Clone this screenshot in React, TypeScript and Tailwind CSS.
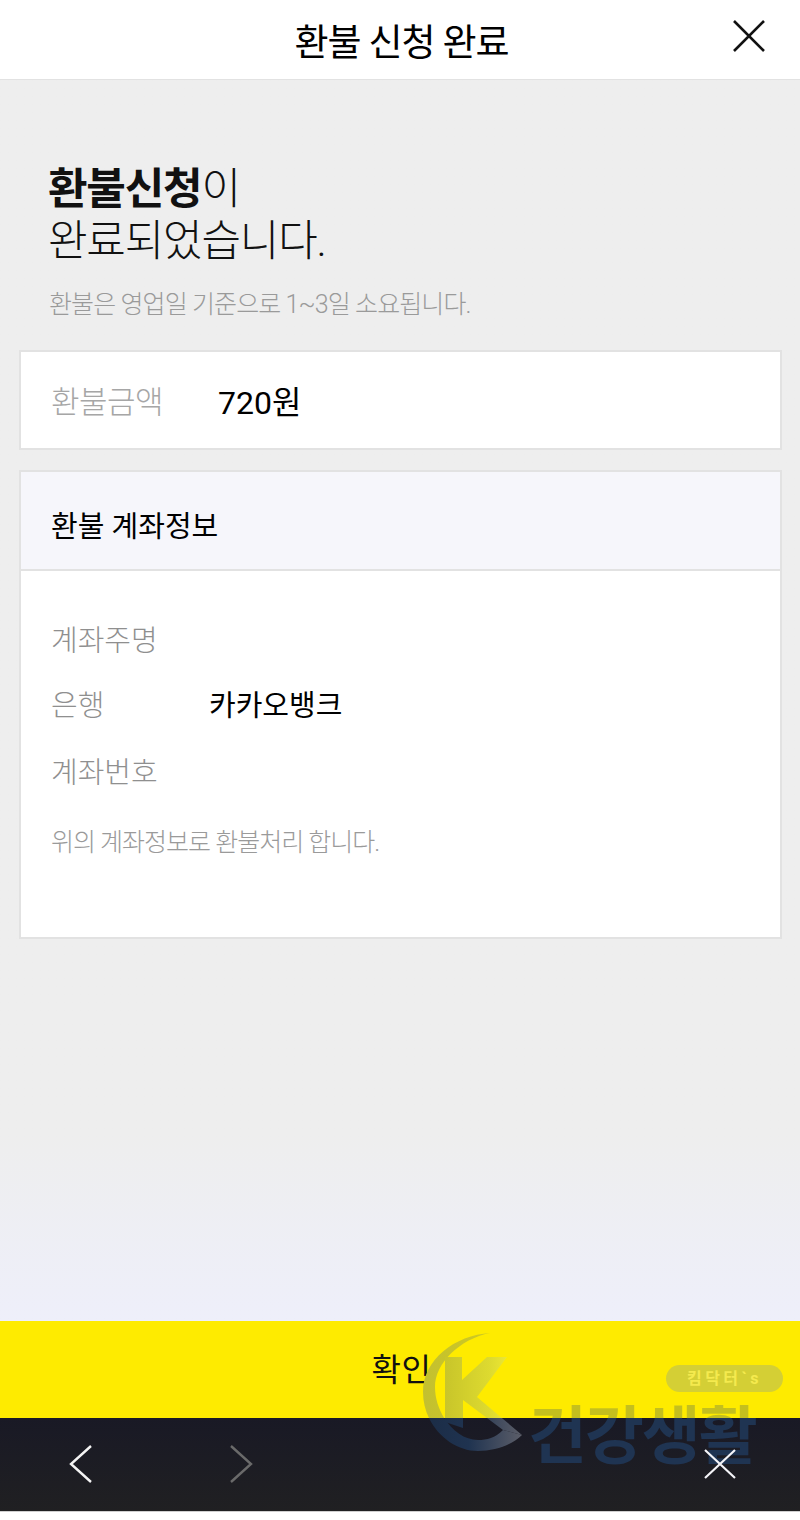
const kr = "font-['Roboto','Noto_Sans_CJK_KR','Noto_Sans',sans-serif]";

function Watermark() {
  const ring = "M75 8 C40 10 8 35 8 67 C8 100 35 126 63 126 C80 126 97 120 107 110 L88 105 C80 113 72 115 63 115 C40 115 20 88 20 62 C20 38 45 14 75 8 Z";
  const k = "M30 32 H47 V55 L72 32 H92 L62 72 L107 110 L88 105 L48 75 V103 L30 97 Z";
  return (
    <div className="absolute left-[415px] top-[1325px] w-[375px] h-[150px] pointer-events-none">
      <svg className="absolute left-0 top-0" width="125" height="135" viewBox="0 0 125 135" fill="none">
        <defs>
          <clipPath id="above"><rect x="0" y="0" width="125" height="93" /></clipPath>
          <clipPath id="below"><rect x="0" y="93" width="125" height="42" /></clipPath>
          <linearGradient id="ringTop" x1="0" y1="0" x2="1" y2="0">
            <stop offset="0" stopColor="#c3c030" />
            <stop offset="0.7" stopColor="#cfca20" />
            <stop offset="1" stopColor="#efe405" />
          </linearGradient>
          <linearGradient id="kTop" x1="0" y1="0" x2="1" y2="0">
            <stop offset="0" stopColor="#c8c52a" />
            <stop offset="0.6" stopColor="#dedb30" />
            <stop offset="0.85" stopColor="#efe935" />
          </linearGradient>
          <linearGradient id="low" gradientUnits="userSpaceOnUse" x1="10" y1="0" x2="107" y2="0">
            <stop offset="0" stopColor="#1b2c46" />
            <stop offset="0.45" stopColor="#1f3350" />
            <stop offset="1" stopColor="#5c5e69" />
          </linearGradient>
        </defs>
        <g clipPath="url(#above)">
          <path d={ring} fill="url(#ringTop)" />
          <path d={k} fill="url(#kTop)" />
        </g>
        <g clipPath="url(#below)">
          <path d={ring} fill="url(#low)" />
          <path d={k} fill="url(#low)" />
        </g>
      </svg>
      <div className={`absolute left-[251px] top-[40px] w-[117px] h-[27px] rounded-full bg-[#d4cf35] flex items-center justify-center text-[16px] font-bold tracking-[3.5px] text-[#f4ea4e] ${kr}`}>
        킴닥터`s
      </div>
      <div className={`absolute left-[113px] top-[80px] text-[64px] leading-[64px] font-bold tracking-[-2px] whitespace-nowrap text-transparent bg-clip-text bg-[linear-gradient(to_bottom,#c4bf1e_13px,#1f3452_13px)] ${kr}`}>
        건강생활
      </div>
    </div>
  );
}

export default function App() {
  return (
    <div className={`relative w-[800px] h-[1520px] overflow-hidden bg-white flex flex-col ${kr}`}>
      <header className="relative h-[80px] shrink-0 bg-white border-b border-[#e2e2e2] flex items-center justify-center pt-[8px]">
        <h1 className="ml-[3px] text-[37px] leading-none text-black font-normal tracking-[-1.1px]">환불 신청 완료</h1>
        <svg className="absolute left-[732px] top-[19px]" width="34" height="34" viewBox="0 0 34 34" fill="none" stroke="#111" strokeWidth="2.6">
          <path d="M2 2 L32 32 M32 2 L2 32" />
        </svg>
      </header>

      <main className="flex-1 min-h-0 bg-gradient-to-b from-[#eeeeee] from-[85%] to-[#eeeffa] flex flex-col pl-[19px] pr-[18px]">
        <section className="px-[29px] pt-[83px]">
          <p className="text-[43px] leading-[52px] tracking-[-1.2px] text-[#111] font-light">
            <b className="font-bold">환불신청</b>이<br />완료되었습니다.
          </p>
          <p className="mt-[21px] ml-[1px] text-[25px] leading-[34px] tracking-[-0.9px] text-[#9a9a9a] font-light">
            환불은 영업일 기준으로 1~3일 소요됩니다.
          </p>
        </section>

        <section className="mt-[28px] h-[100px] bg-white border-2 border-[#e2e2e2] flex items-center pl-[30px] pt-[6px]">
          <span className="w-[167px] text-[31px] tracking-[-0.5px] text-[#a6a6a6] font-light">환불금액</span>
          <span className="text-[32px] text-black">720원</span>
        </section>

        <section className="mt-[20px] h-[469px] bg-white border-2 border-[#e2e2e2] flex flex-col">
          <div className="h-[99px] shrink-0 bg-[#f6f6fb] border-b-2 border-[#e2e2e2] flex items-center pl-[30px] pt-[14px] text-[29px] text-black">
            환불 계좌정보
          </div>
          <div className="pl-[30px] pt-[37px]">
            <div className="h-[66px] text-[29px] leading-[66px] text-[#8f8f8f] font-light">계좌주명</div>
            <div className="h-[66px] flex items-center">
              <span className="w-[158px] text-[29px] text-[#8f8f8f] font-light">은행</span>
              <span className="text-[29px] text-black">카카오뱅크</span>
            </div>
            <div className="h-[66px] text-[29px] leading-[66px] text-[#8f8f8f] font-light">계좌번호</div>
            <p className="mt-[7px] text-[25px] leading-[60px] tracking-[-1px] text-[#9a9a9a] font-light">위의 계좌정보로 환불처리 합니다.</p>
          </div>
        </section>
      </main>

      <button className="h-[97px] shrink-0 bg-[#feeb00] flex items-center justify-center pl-[3px] text-[32px] tracking-[0.5px] text-[#111]">확인</button>

      <nav className="relative h-[93px] shrink-0 bg-gradient-to-b from-[#191925] to-[#202022]">
        <svg className="absolute left-[68px] top-[26px]" width="26" height="40" viewBox="0 0 26 40" fill="none" stroke="#f4f4f4" strokeWidth="2.4">
          <path d="M23 2 L3 20 L23 38" />
        </svg>
        <svg className="absolute left-[228px] top-[26px]" width="26" height="40" viewBox="0 0 26 40" fill="none" stroke="#6a6a6a" strokeWidth="2.4">
          <path d="M3 2 L23 20 L3 38" />
        </svg>
        <svg className="absolute left-[703px] top-[30px] z-10" width="34" height="32" viewBox="0 0 34 32" fill="none" stroke="#f4f4f8" strokeWidth="2.2">
          <path d="M2 2 L32 30 M32 2 L2 30" />
        </svg>
      </nav>
      <div className="h-[9px] shrink-0 bg-white border-t border-[#cfcfcf]" />
      <Watermark />
    </div>
  );
}
